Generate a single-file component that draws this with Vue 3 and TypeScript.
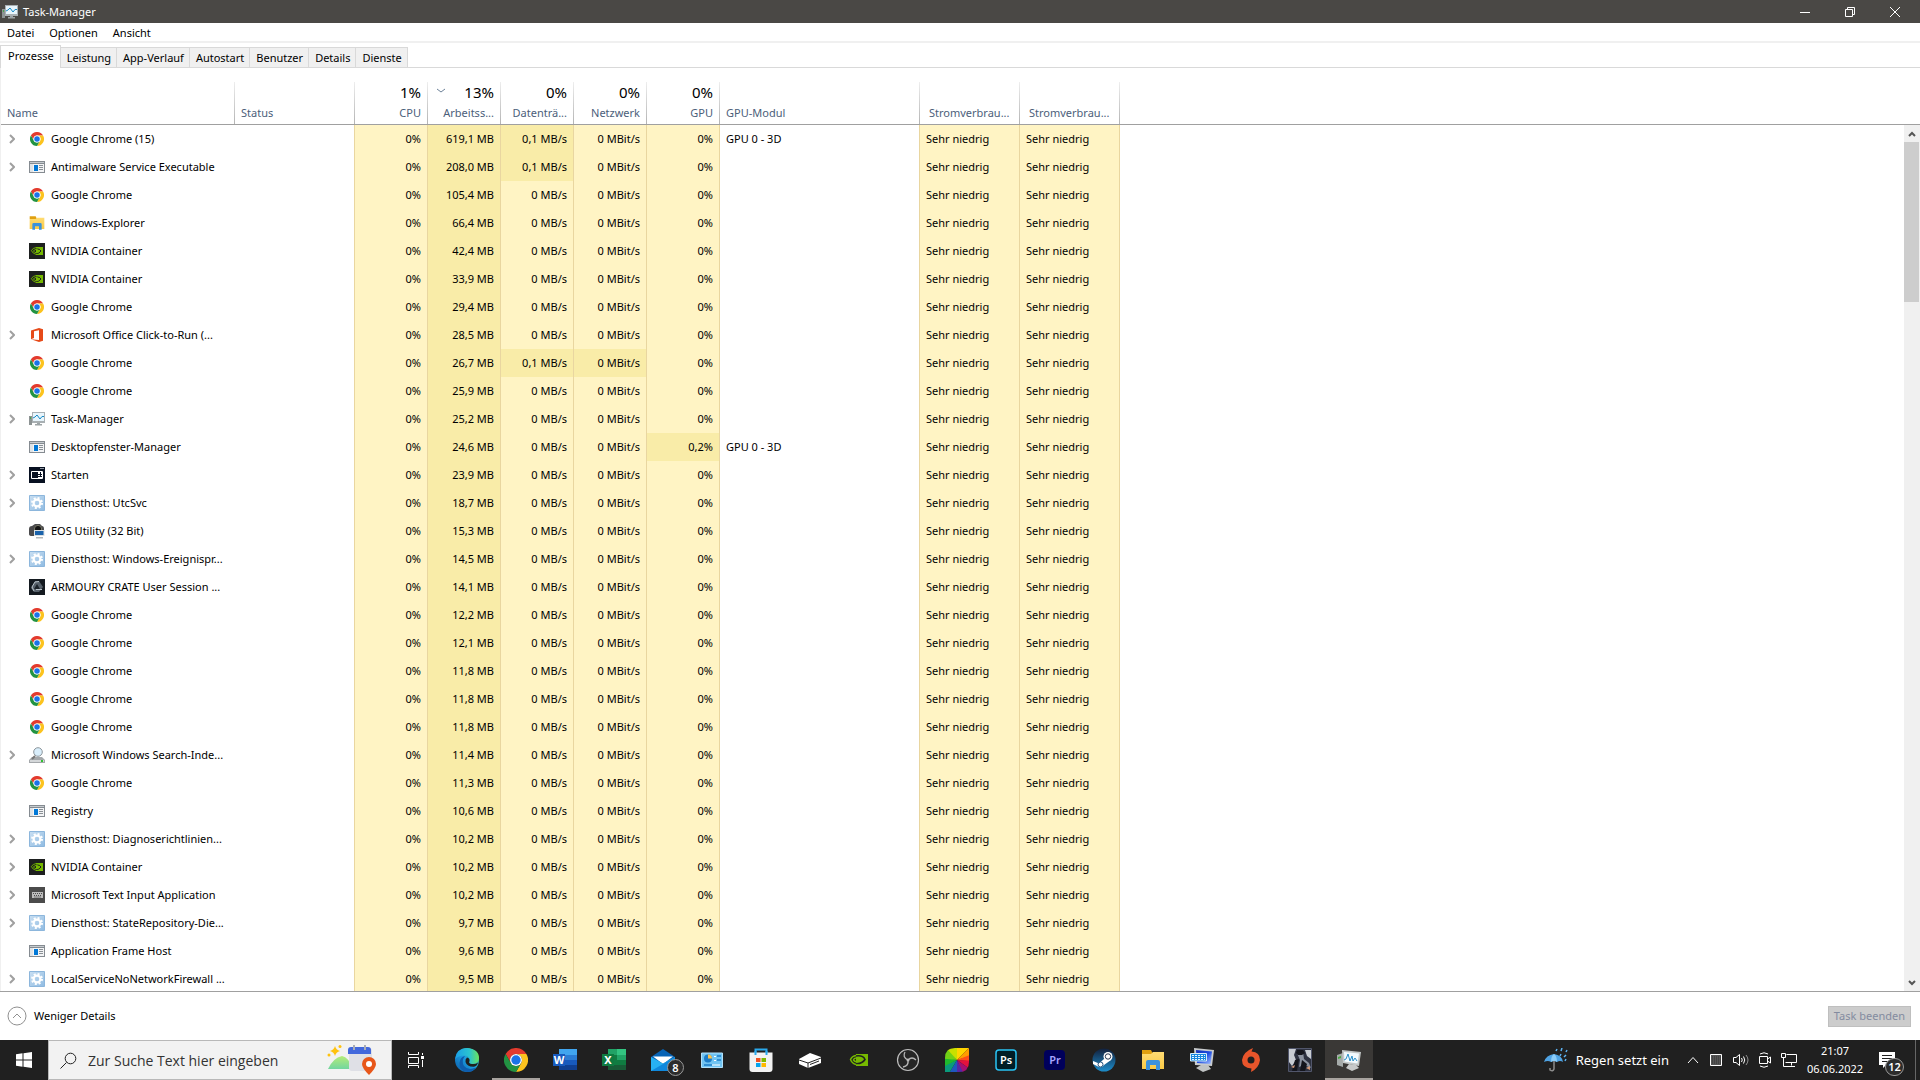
<script setup lang="ts">
import { ref } from 'vue'

interface Proc {
  name: string
  icon: string
  expandable: boolean
  memory: string
  disk: string
  gpu: string
  engine: string
  busyNet: boolean
}

interface Column {
  key: string
  label: string
  total?: string
  numeric?: boolean
  sorted?: boolean
}

function proc(name: string, icon: string, memory: string, expandable = false, extra: Partial<Proc> = {}): Proc {
  return { name, icon, memory, expandable, disk: '0 MB/s', gpu: '0%', engine: '', busyNet: false, ...extra }
}

const menu = ['Datei', 'Optionen', 'Ansicht']
const tabs = ['Prozesse', 'Leistung', 'App-Verlauf', 'Autostart', 'Benutzer', 'Details', 'Dienste']
const activeTab = ref('Prozesse')
const search = ref('')

const columns: Column[] = [
  { key: 'name', label: 'Name' },
  { key: 'status', label: 'Status' },
  { key: 'cpu', label: 'CPU', total: '1%', numeric: true },
  { key: 'memory', label: 'Arbeitss...', total: '13%', numeric: true, sorted: true },
  { key: 'disk', label: 'Datenträ...', total: '0%', numeric: true },
  { key: 'net', label: 'Netzwerk', total: '0%', numeric: true },
  { key: 'gpu', label: 'GPU', total: '0%', numeric: true },
  { key: 'engine', label: 'GPU-Modul' },
  { key: 'power', label: 'Stromverbrau...' },
  { key: 'trend', label: 'Stromverbrau...' },
]

const processes: Proc[] = [
  proc('Google Chrome (15)', 'chrome', '619,1 MB', true, { disk: '0,1 MB/s', engine: 'GPU 0 - 3D' }),
  proc('Antimalware Service Executable', 'window', '208,0 MB', true, { disk: '0,1 MB/s' }),
  proc('Google Chrome', 'chrome', '105,4 MB'),
  proc('Windows-Explorer', 'folder', '66,4 MB'),
  proc('NVIDIA Container', 'nvidia', '42,4 MB'),
  proc('NVIDIA Container', 'nvidia', '33,9 MB'),
  proc('Google Chrome', 'chrome', '29,4 MB'),
  proc('Microsoft Office Click-to-Run (...', 'office', '28,5 MB', true),
  proc('Google Chrome', 'chrome', '26,7 MB', false, { disk: '0,1 MB/s', busyNet: true }),
  proc('Google Chrome', 'chrome', '25,9 MB'),
  proc('Task-Manager', 'taskmgr', '25,2 MB', true),
  proc('Desktopfenster-Manager', 'window', '24,6 MB', false, { gpu: '0,2%', engine: 'GPU 0 - 3D' }),
  proc('Starten', 'start', '23,9 MB', true),
  proc('Diensthost: UtcSvc', 'gear', '18,7 MB', true),
  proc('EOS Utility (32 Bit)', 'camera', '15,3 MB'),
  proc('Diensthost: Windows-Ereignispr...', 'gear', '14,5 MB', true),
  proc('ARMOURY CRATE User Session ...', 'armoury', '14,1 MB'),
  proc('Google Chrome', 'chrome', '12,2 MB'),
  proc('Google Chrome', 'chrome', '12,1 MB'),
  proc('Google Chrome', 'chrome', '11,8 MB'),
  proc('Google Chrome', 'chrome', '11,8 MB'),
  proc('Google Chrome', 'chrome', '11,8 MB'),
  proc('Microsoft Windows Search-Inde...', 'indexer', '11,4 MB', true),
  proc('Google Chrome', 'chrome', '11,3 MB'),
  proc('Registry', 'window', '10,6 MB'),
  proc('Diensthost: Diagnoserichtlinien...', 'gear', '10,2 MB', true),
  proc('NVIDIA Container', 'nvidia', '10,2 MB', true),
  proc('Microsoft Text Input Application', 'keyboard', '10,2 MB', true),
  proc('Diensthost: StateRepository-Die...', 'gear', '9,7 MB', true),
  proc('Application Frame Host', 'window', '9,6 MB'),
  proc('LocalServiceNoNetworkFirewall ...', 'gear', '9,5 MB', true),
]

const pinned = [
  { icon: 'edge', title: 'Microsoft Edge' },
  { icon: 'chrome', title: 'Google Chrome', running: true },
  { icon: 'word', title: 'Word', letter: 'W' },
  { icon: 'excel', title: 'Excel', letter: 'X' },
  { icon: 'mail', title: 'Mail', badge: '8' },
  { icon: 'panel', title: 'Systemsteuerung' },
  { icon: 'store', title: 'Microsoft Store' },
  { icon: 'scanner', title: 'Scanner' },
  { icon: 'nveye', title: 'GeForce Experience' },
  { icon: 'obs', title: 'OBS Studio' },
  { icon: 'wheel', title: 'Farben' },
  { icon: 'ps', title: 'Photoshop', letter: 'Ps' },
  { icon: 'pr', title: 'Premiere Pro', letter: 'Pr' },
  { icon: 'steam', title: 'Steam' },
  { icon: 'folder', title: 'Explorer' },
  { icon: 'remote', title: 'Bildschirmtastatur' },
  { icon: 'origin', title: 'Origin' },
  { icon: 'game', title: 'Spiel' },
  { icon: 'taskmgr3d', title: 'Task-Manager', active: true },
]
</script>

<template>
  <svg class="sprites" width="0" height="0" aria-hidden="true">
    <defs>
      <linearGradient id="gEdge" x1="0" y1="1" x2="1" y2="0"><stop offset="0" stop-color="#0c59a4" /><stop offset=".5" stop-color="#1b9de2" /><stop offset="1" stop-color="#5ee06a" /></linearGradient>
      <linearGradient id="gEdgeTop" x1="0" y1="0" x2="1" y2="0"><stop offset="0" stop-color="#1a9fe8" /><stop offset=".6" stop-color="#2bc4cf" /><stop offset="1" stop-color="#6be35c" /></linearGradient>
      <linearGradient id="gSteam" x1="0" y1="0" x2="0" y2="1"><stop offset="0" stop-color="#12203c" /><stop offset="1" stop-color="#1d8dcb" /></linearGradient>
      <linearGradient id="gGear" x1="0" y1="0" x2="1" y2="1"><stop offset="0" stop-color="#c9dff2" /><stop offset="1" stop-color="#8fbbe2" /></linearGradient>
      <linearGradient id="gFolder" x1="0" y1="0" x2="0" y2="1"><stop offset="0" stop-color="#ffdc73" /><stop offset="1" stop-color="#f9c945" /></linearGradient>
      <linearGradient id="gScreen" x1="0" y1="0" x2="1" y2="1"><stop offset="0" stop-color="#1030b8" /><stop offset=".5" stop-color="#1e4ce0" /><stop offset="1" stop-color="#a8c4ff" /></linearGradient>
      <linearGradient id="gHill" x1="0" y1="0" x2="0" y2="1"><stop offset="0" stop-color="#b5ec78" /><stop offset="1" stop-color="#72d6a0" /></linearGradient>
      <clipPath id="leaf"><path d="M10 0H24V14Q24 24 14 24H0V10Q0 0 10 0Z" /></clipPath>
    </defs>
    <symbol id="chrome" viewBox="0 0 24 24">
      <path fill="#e33b2e" d="M1.6 6A12 12 0 0 1 22.4 6H12A6 6 0 0 0 6.8 15Z" />
      <path fill="#fcc31e" d="M22.4 6A12 12 0 0 1 12 24L17.2 15A6 6 0 0 0 12 6Z" />
      <path fill="#229342" d="M12 24A12 12 0 0 1 1.6 6L6.8 15A6 6 0 0 0 17.2 15Z" />
      <circle cx="12" cy="12" r="6" fill="#fff" /><circle cx="12" cy="12" r="4.7" fill="#1a73e8" />
    </symbol>
    <symbol id="window" viewBox="0 0 16 16">
      <path fill="#858b91" d="M0 2H16V14H0Z" /><path fill="#f3f4f5" d="M1 5H15V13H1Z" /><path fill="#c5cace" d="M1 3H15V4H1Z" />
      <path fill="#dfe3e6" d="M1 5H4V13H1Z" /><path fill="#0078d7" d="M5 6H9V12H5Z" /><path stroke="#8a9096" d="M10 6.5H14M10 8.5H14M10 10.5H14" />
    </symbol>
    <symbol id="folder" viewBox="0 0 24 24">
      <path fill="#e0a010" d="M1 2H10L12 6H1Z" /><path fill="url(#gFolder)" d="M1 6H10L12 4H23V21H1Z" />
      <path fill="#3b92dc" d="M5 22V14Q5 12 7 12H17Q19 12 19 14V22H15V17H9V22Z" />
    </symbol>
    <symbol id="nvidia" viewBox="0 0 16 16">
      <path fill="#1d1f1f" d="M0 0H16V16H0Z" /><path fill="#76b900" d="M7 4H14V12H7Z" />
      <path fill="none" stroke="#1d1f1f" d="M7 6Q11 5.5 12 8Q10 11 7 10.5" />
      <path fill="none" stroke="#76b900" stroke-width=".9" d="M7 4.6Q4 5 2.3 7.5Q4 10.8 7 11.3M7 6.4Q5 6.8 4.5 8Q5.5 9.8 7.5 9.8Q9.5 9 10 8Q8.5 6.2 7 6.4" />
    </symbol>
    <symbol id="office" viewBox="0 0 16 16">
      <path fill="#e64a19" d="M2 3.5L10 1L14 2.2V13.8L10 15L2 12.2L10 13V3.2L5 4.3V11L2 12.2Z" />
    </symbol>
    <symbol id="taskmgr" viewBox="0 0 16 16">
      <path fill="#8d9394" d="M0 5H3V14H0Z" /><path fill="#4ca64c" d="M1 6H2V8H1Z" />
      <path fill="#a9b0b3" d="M3 1H16V12H3Z" /><path fill="#e8f5fc" d="M4 2H15V10H4Z" />
      <path fill="none" stroke="#168bc7" d="M4 7L6 6L8 4L11 8L13 5.5H15" /><path fill="#9da4a6" d="M8 12H11V13H13V14.5H6V13H8Z" />
    </symbol>
    <symbol id="start" viewBox="0 0 16 16">
      <path fill="#071021" d="M0 0H16V16H0Z" /><path fill="none" stroke="#fff" d="M2.5 4.5H13.5V11.5H2.5Z" />
      <path fill="#fff" d="M8 5H13V11H8Z" /><path stroke="#071021" d="M9 7.5H13M9 9.5H13M8.5 5V11M11.5 5V10" /><path stroke="#8e95a0" d="M11 1.5H15" />
    </symbol>
    <symbol id="gear" viewBox="0 0 16 16">
      <path fill="url(#gGear)" stroke="#8cb6dc" d="M.5 .5H15.5V15.5H.5Z" />
      <circle cx="8" cy="8" r="3.4" fill="none" stroke="#fff" stroke-width="2.2" />
      <circle cx="8" cy="8" r="5" fill="none" stroke="#fff" stroke-width="2" stroke-dasharray="2 1.927" />
    </symbol>
    <symbol id="camera" viewBox="0 0 16 16">
      <path fill="#4b4b4d" d="M0 6Q0 3 3 3L6 1H11L13 3Q15 3 15 6V12L12 13H3Q0 13 0 11Z" /><circle cx="9" cy="6" r="3.6" fill="#141414" stroke="#776" />
      <path fill="#d9dfe2" d="M5 7H15.5V13H5Z" /><path fill="#1b63ab" d="M6 8H14.5V12H6Z" /><path fill="#b4b8ba" d="M7 14H14V15.5H7Z" />
    </symbol>
    <symbol id="armoury" viewBox="0 0 16 16">
      <path fill="#141a20" d="M0 0H16V16H0Z" /><path fill="#56606a" d="M6 2L10 2L14 8L10 13H5L2 9Z" />
      <path fill="#1b2229" d="M8 5L11 10H5Z" /><path fill="none" stroke="#b7c1c8" d="M10 2.5L6 3L3 8L5 12M7 10.5H13" />
    </symbol>
    <symbol id="indexer" viewBox="0 0 16 16">
      <path fill="#a4a8ab" d="M3 10H13L16 13V16H0V13Z" /><path fill="#d4d7d9" d="M1 13H15V15H1Z" /><path fill="#2fc02f" d="M12 13H14V15H12Z" />
      <path stroke="#777" stroke-width="2" d="M6 9L3 12" /><circle cx="9" cy="5" r="4.3" fill="#d9eefb" stroke="#8c959b" />
    </symbol>
    <symbol id="keyboard" viewBox="0 0 16 16">
      <path fill="#4b4b4b" d="M0 0H16V16H0Z" /><path fill="#bdbdbd" d="M3 5H14V11H3Z" />
      <path stroke="#4b4b4b" stroke-dasharray="1 1" d="M4 6.5H13M5 8.5H13" /><path stroke="#777" d="M5 10H12" />
    </symbol>
    <symbol id="edge" viewBox="0 0 24 24">
      <circle cx="12" cy="12" r="12" fill="url(#gEdge)" />
      <path fill="url(#gEdgeTop)" d="M.2 11Q1.5 0 12 0Q24 1 24 10Q23.5 16 17 16Q13 15.5 14.5 13Q15.5 8 10 7.5Q4 7 .2 11Z" />
      <path fill="#0e5cad" d="M10 8Q6 13 9 18Q13 23 21 19.5Q18 24 12 24Q4 23 4.5 15Q5 9 10 8Z" />
      <path fill="#202020" d="M12 9.5Q15 10 14.5 13Q13 15.500 17 16Q20.5 16.5 23 14.5Q22 18.5 19 18.7Q12 19 10.5 14Q10 11 12 9.5Z" />
    </symbol>
    <symbol id="word" viewBox="0 0 24 24">
      <path fill="#41a5ee" d="M6 1H24V7H6Z" /><path fill="#2b7cd3" d="M6 7H24V12H6Z" /><path fill="#185abd" d="M6 12H24V17H6Z" /><path fill="#103f91" d="M6 17H24V22H6Z" />
      <path fill="#185abd" d="M0 6H12V18H0Z" />
    </symbol>
    <symbol id="excel" viewBox="0 0 24 24">
      <path fill="#21a366" d="M6 1H15V7H6Z" /><path fill="#33c481" d="M15 1H24V7H15Z" /><path fill="#107c41" d="M6 7H15V17H6Z" /><path fill="#21a366" d="M15 7H24V12H15Z" />
      <path fill="#107c41" d="M15 12H24V17H15Z" /><path fill="#185c37" d="M6 17H24V22H6Z" /><path fill="#0f7a40" d="M0 6H12V18H0Z" />
    </symbol>
    <symbol id="mail" viewBox="0 0 24 24">
      <path fill="#0763b5" d="M0 9L12 1L24 9V14H0Z" /><path fill="#fff" d="M2 8.5H22L12 16Z" /><path fill="#27b1f3" d="M0 9L12 15.5L24 9V23H0Z" /><path fill="#0f88dc" d="M0 23L24 9V23Z" />
    </symbol>
    <symbol id="panel" viewBox="0 0 24 24">
      <path fill="#71c4f2" stroke="#b2e1fb" d="M1.5 5H22.5V19.5H1.5Z" /><circle cx="8" cy="10.5" r="4" fill="#1c7cc8" /><path fill="#ffc34c" d="M8 10.5V6.5A4 4 0 0 1 12 10.5Z" />
      <path stroke="#fff" d="M14 8.5H16M14 12.5H16" /><path stroke="#1c7cc8" stroke-width="1.5" d="M17 8H21M17 12H21M4 17H12" /><path stroke="#fff" d="M12 17H20" />
    </symbol>
    <symbol id="store" viewBox="0 0 24 24">
      <path fill="none" stroke="#2aa9ec" stroke-width="2" d="M6.5 7V1.5H17.5V7" /><path fill="#f2f2f2" d="M.5 4.5H23.5V21Q23.5 24 20.5 24H3.5Q.5 24 .5 21Z" /><path stroke="#2aa9ec" stroke-width="2" d="M6.5 3V7M17.5 3V7" />
      <path fill="#f04f22" d="M7 10H11.5V14H7Z" /><path fill="#7eb900" d="M12.5 10H17V14H12.5Z" /><path fill="#03a3ed" d="M7 15H11.5V19H7Z" /><path fill="#ffb900" d="M12.5 15H17V19H12.5Z" />
    </symbol>
    <symbol id="scanner" viewBox="0 0 24 24">
      <path fill="#fff" d="M1 11L12 5L23 9V15L10 20L1 16Z" /><path fill="none" stroke="#222" d="M1 12L10 15L23 10M10 15V20M12 16.5L21 13" />
    </symbol>
    <symbol id="nveye" viewBox="0 0 24 24">
      <path fill="#76b900" d="M9 6H21V18H9Z" /><path fill="none" stroke="#202020" stroke-width="1.6" d="M9 8Q16 7 18 11.5Q15 16 9 15.5" />
      <path fill="none" stroke="#76b900" stroke-width="1.5" d="M9 7.5Q5 8 3.5 11.5Q5 15.5 9 16.5M9 10Q7 10 6.5 12Q8 14.5 11 13.5Q13 12.5 13.5 11.5Q12 9.5 9 10" />
    </symbol>
    <symbol id="obs" viewBox="0 0 24 24">
      <circle cx="12" cy="12" r="10.5" fill="#262626" stroke="#bdbdbd" stroke-width="1.2" />
      <path fill="none" stroke="#b5b5b5" stroke-width="1.3" d="M9 4Q6 9 12 12M12 12Q16 8 20 12M12 12Q13 18 7 19" />
      <circle cx="12" cy="12" r="1.5" fill="#bdbdbd" />
    </symbol>
    <symbol id="wheel" viewBox="0 0 24 24">
      <g clip-path="url(#leaf)">
        <path fill="#ffd400" d="M12 12L12-8L32-8Z" /><path fill="#ff9c00" d="M12 12L32-8V6Z" /><path fill="#ff4d18" d="M12 12L32 4V14Z" />
        <path fill="#e3123d" d="M12 12L32 13V26Z" /><path fill="#a70f70" d="M12 12L32 26V32H20Z" /><path fill="#5727a5" d="M12 12L22 32H10Z" />
        <path fill="#1f58bf" d="M12 12L12 32H0Z" /><path fill="#0a9a7c" d="M12 12L0 32H-8V20Z" /><path fill="#1fb92d" d="M12 12L-8 22V8Z" /><path fill="#71d016" d="M12 12L-8 10V-8H-2Z" /><path fill="#c8e000" d="M12 12L-6-8H12Z" />
      </g>
    </symbol>
    <symbol id="ps" viewBox="0 0 24 24"><rect x="2" y="2" width="20" height="20" rx="3" fill="#001d26" stroke="#28c3f4" stroke-width="1.5" /></symbol>
    <symbol id="pr" viewBox="0 0 24 24"><rect x="1" y="2" width="21" height="20" rx="4" fill="#00005b" /></symbol>
    <symbol id="steam" viewBox="0 0 24 24">
      <circle cx="12" cy="12" r="11.5" fill="url(#gSteam)" /><path fill="#fff" d="M1 13L7 15.5L12 11L19 12L12 17Q9 21 5 18L1 16Z" />
      <circle cx="16" cy="8.5" r="4.5" fill="#fff" /><circle cx="16" cy="8.5" r="2.7" fill="#fff" stroke="#24364f" /><circle cx="8.5" cy="16.5" r="2.5" fill="#fff" stroke="#24517c" />
    </symbol>
    <symbol id="remote" viewBox="0 0 24 24">
      <path fill="#c8cbcd" d="M4 0L24 2L22 18L5 17Z" /><path fill="url(#gScreen)" d="M6 2L22 3.5L20.5 16L7 15Z" /><path fill="#1687e0" stroke="#d7ecfa" d="M.5 5.5H16.5V13H.5Z" />
      <path stroke="#e8f5ff" stroke-dasharray="2 1" d="M2 7.5H15M2 9.5H15M2 11.5H15" /><path fill="#c0c3c4" d="M11 17H18L21 21L13 24L6 20Z" />
    </symbol>
    <symbol id="origin" viewBox="0 0 24 24">
      <path fill="#e8552b" d="M14 0L12.5 3.5Q21 4 21 12Q20 20 12 24L12.5 20.5Q3 20 3 12Q4 4 14 0Z" /><circle cx="12" cy="12" r="3.5" fill="#202020" />
    </symbol>
    <symbol id="game" viewBox="0 0 24 24">
      <path fill="#2d3140" stroke="#51566b" d="M.5 .5H23.5V23.5H.5Z" /><path fill="#c8ccd3" d="M1 1H8L6 7L8 12L4 18L1 14ZM17 2H23V11L19 8Z" /><path fill="#8b929f" d="M9 5L15 4L16 11L21 15L23 20L16 17L11 19L12 12Z" />
      <path fill="#14151c" d="M9 2H15L17 5L14 7L10 7L8 5ZM7 12L11 11L9 23H4ZM14 12L19 16L17 23H12Z" /><path fill="#d29a7a" d="M3 19L7 17L6 20ZM18 20L22 18V22Z" />
    </symbol>
    <symbol id="taskmgr3d" viewBox="0 0 24 24">
      <path fill="#a5aaa9" d="M0 7L6 5V19L0 17Z" /><path fill="#49a942" d="M1 9L4 8V10L1 11Z" /><path fill="#c4c8c8" d="M5 2L24 4L22 18L6 15Z" /><path fill="#f2fafe" d="M7 4L22 5.5L20.5 15.5L7.5 13.5Z" />
      <path fill="none" stroke="#2a8fc9" d="M7 12L9 11L11 6L13 13L15 8L16 13L18 10L20 13" /><path fill="#c7c9c9" d="M12 16L19 17L22 20L15 23L9 20Z" />
    </symbol>
  </svg>

  <div class="desktop">
    <header class="titlebar">
      <svg class="icon16"><use href="#taskmgr" /></svg>
      <h1>Task-Manager</h1>
      <div class="controls">
        <button aria-label="Minimieren"><svg viewBox="0 0 10 10"><path d="M0 5.5H10" /></svg></button>
        <button aria-label="Verkleinern"><svg viewBox="0 0 10 10"><path d="M.5 2.5H7.5V9.5H.5ZM2.5 2.5V.5H9.5V7.5H7.5" /></svg></button>
        <button aria-label="Schließen"><svg viewBox="0 0 10 10"><path d="M0 0L10 10M10 0L0 10" /></svg></button>
      </div>
    </header>

    <nav class="menu"><button v-for="m in menu" :key="m">{{ m }}</button></nav>

    <div class="tabs" role="tablist">
      <button v-for="t in tabs" :key="t" role="tab" :aria-selected="t === activeTab" :class="{ active: t === activeTab }" @click="activeTab = t">{{ t }}</button>
    </div>

    <main class="list">
      <div class="viewport">
        <table>
          <colgroup>
            <col v-for="c in columns" :key="c.key" :class="'w-' + c.key" />
            <col />
          </colgroup>
          <thead>
            <tr>
              <th v-for="c in columns" :key="c.key" scope="col" :class="['h-' + c.key, { numeric: c.numeric }]">
                <div v-if="c.total" class="total">
                  <svg v-if="c.sorted" class="sort" viewBox="0 0 10 6"><path d="M1 1L5 4L9 1" /></svg>
                  <span>{{ c.total }}</span>
                </div>
                <div class="label">{{ c.label }}</div>
              </th>
              <td class="rest"></td>
            </tr>
          </thead>
          <tbody>
            <tr v-for="(p, i) in processes" :key="i">
              <td>
                <div class="process">
                  <button v-if="p.expandable" class="expand" :aria-label="p.name + ' erweitern'"><svg viewBox="0 0 6 10"><path d="M1 1L5 5L1 9" /></svg></button>
                  <span v-else class="expand"></span>
                  <svg class="icon16" :class="{ small: p.icon === 'chrome' }"><use :href="'#' + p.icon" /></svg>
                  <span>{{ p.name }}</span>
                </div>
              </td>
              <td class="edge"></td>
              <td class="heat numeric">0%</td>
              <td class="heat numeric high">{{ p.memory }}</td>
              <td class="heat numeric" :class="{ high: p.disk !== '0 MB/s' }">{{ p.disk }}</td>
              <td class="heat numeric" :class="{ high: p.busyNet }">0 MBit/s</td>
              <td class="heat numeric" :class="{ high: p.gpu !== '0%' }">{{ p.gpu }}</td>
              <td class="edge">{{ p.engine }}</td>
              <td class="heat">Sehr niedrig</td>
              <td class="heat">Sehr niedrig</td>
              <td></td>
            </tr>
          </tbody>
        </table>
      </div>
      <div class="side">
        <div class="corner"></div>
        <div class="scrollbar">
          <button aria-label="Nach oben"><svg viewBox="0 0 8 6"><path d="M1 5L4 2L7 5" /></svg></button>
          <div class="track"><div class="thumb"></div></div>
          <button aria-label="Nach unten"><svg viewBox="0 0 8 6"><path d="M1 1L4 4L7 1" /></svg></button>
        </div>
      </div>
    </main>

    <footer class="actions">
      <button class="fewer">
        <svg viewBox="0 0 20 20"><circle cx="10" cy="10" r="9" /><path d="M6 12L10 8L14 12" /></svg>
        <span>Weniger Details</span>
      </button>
      <button class="end" disabled>Task beenden</button>
    </footer>

    <div class="taskbar">
      <button class="startbtn" aria-label="Start">
        <svg viewBox="0 0 16 16"><path fill="#fff" d="M0 2.2L6.5 1.3V7.5H0ZM7.5 1.2L16 0V7.5H7.5ZM0 8.5H6.5V14.7L0 13.8ZM7.5 8.5H16V16L7.5 14.8Z" /></svg>
      </button>
      <label class="search">
        <svg class="lens" viewBox="0 0 17 17"><circle cx="10.5" cy="6.5" r="5.3" /><path d="M6.5 10.5L.5 16.5" /></svg>
        <input v-model="search" type="text" placeholder="Zur Suche Text hier eingeben" aria-label="Suche" />
        <svg class="scene" viewBox="0 0 50 32">
          <path fill="#ffc20e" d="M8 2Q9 6 13 7Q9 8 8 12Q7 8 3 7Q7 6 8 2Z" /><circle cx="13" cy="2.5" r="1.5" fill="#ffc20e" /><circle cx="2" cy="11" r="1.5" fill="#ffc20e" />
          <path fill="url(#gHill)" d="M1 25Q6 14 15 12Q22 13 25 25Z" /><rect x="22" y="4" width="23" height="23" rx="3" fill="#dfe0e6" />
          <path fill="#4268dc" d="M21 10V6Q21 3 24 3H41Q44 3 44 6V10Z" /><path stroke="#a9acb5" stroke-width="2" d="M27 1V6M38 1V6" />
          <path fill="#e8571a" d="M42 31Q35 24 35 20A7 7 0 0 1 49 20Q49 24 42 31Z" /><circle cx="42" cy="20" r="3" fill="#fff" />
        </svg>
      </label>
      <button class="taskview" aria-label="Aktive Anwendungen">
        <svg viewBox="0 0 16 16"><path fill="none" stroke="#fff" d="M.5 0V2.5H10.5V0M.5 5.5H10.5V11.5H.5ZM.5 16V13.5H10.5V16M14.5 1V3M14.5 8V15" /><path fill="#fff" d="M13 4H16V7H13Z" /></svg>
      </button>
      <div class="apps">
        <button v-for="a in pinned" :key="a.icon" class="app" :class="{ running: a.running, active: a.active }" :aria-label="a.title">
          <svg class="icon24"><use :href="'#' + a.icon" /></svg>
          <span v-if="a.letter" class="letter" :class="'l-' + a.icon">{{ a.letter }}</span>
          <span v-if="a.badge" class="badge">{{ a.badge }}</span>
        </button>
      </div>
      <div class="tray">
        <button class="weather">
          <svg viewBox="0 0 24 24"><path fill="#4fa3e3" d="M0 14Q2 7 10 6Q18 7 19 14Q16 12 13 14Q10 12 7 14Q4 12 0 14Z" /><path fill="#8cccf7" d="M7 14Q7 8 10 6Q13 8 13 14Q10 12 7 14Z" /><path fill="none" stroke="#8c8c8c" stroke-width="1.5" d="M10 13V21Q9 24 6 22V20" /><path stroke="#5db3f2" stroke-width="1.5" d="M12 3L13 1M17 3L18 0M22 4L23 2M16 8L17 6M20 9L22 7M21 13L22 11" /></svg>
          <span>Regen setzt ein</span>
        </button>
        <button class="t-up" aria-label="Ausgeblendete Symbole"><svg viewBox="0 0 12 12"><path d="M1 9L6 3.5L11 9" /></svg></button>
        <button class="t-grid" aria-label="Anzeige"><svg viewBox="0 0 12 12"><path fill="#555" d="M.5 .5H11.5V11.5H.5Z" /><path stroke="#333" stroke-dasharray="1 1" d="M2 3H11M2 5H11M2 7H11M2 9H11" /></svg></button>
        <button class="t-vol" aria-label="Lautsprecher"><svg viewBox="0 0 16 16"><path d="M.5 5.5H3L6.5 2.5V13.5L3 10.5H.5ZM8.5 6Q10 8 8.5 10M10.5 4.5Q13 8 10.5 11.5" /><path opacity=".5" d="M13 3Q17 8 13 13" /></svg></button>
        <button class="t-cam" aria-label="Jetzt besprechen"><svg viewBox="0 0 12 16"><path d="M1 2Q5 -.5 9 2M1 14Q5 16.5 9 14M.5 4.5H8.5V11.5H.5ZM8.5 7L11.5 5V11L8.5 9" /></svg></button>
        <button class="t-net" aria-label="Netzwerk"><svg viewBox="0 0 16 16"><path d="M5.5 2.5H15.5V10.5H4.5M10.5 10.5V13.5M6 14.5H14M.5 1.5H4.5V5.5H.5ZM2.5 5.5V14.5H6" /></svg></button>
        <div class="clock"><time>21:07</time><time>06.06.2022</time></div>
        <button class="notify" aria-label="Benachrichtigungen">
          <svg viewBox="0 0 16 16"><path fill="#fff" d="M0 0H16V13H7L4 16V13H0Z" /><path stroke="#202020" d="M3 3.5H13M3 6.5H13M3 9.5H9" /></svg>
          <span class="badge">12</span>
        </button>
        <button class="peek" aria-label="Desktop anzeigen"></button>
      </div>
    </div>
  </div>
</template>

<style>
body {
  margin: 0;
  background: #fff;
}
</style>

<style scoped>
.desktop {
  display: flex;
  flex-direction: column;
  height: 100vh;
  overflow: hidden;
  font: 11px/16px "Noto Sans", "Open Sans", sans-serif;
  color: #000;
}
.sprites {
  position: absolute;
}
button {
  margin: 0;
  padding: 0;
  border: 0;
  background: none;
  font: inherit;
  color: inherit;
}
svg {
  display: block;
  flex: none;
}
.icon16 {
  width: 16px;
  height: 16px;
}
.icon16.small {
  width: 14px;
  height: 14px;
  margin: 0 1px;
}
.icon24 {
  width: 24px;
  height: 24px;
}

.titlebar {
  display: flex;
  align-items: center;
  flex: none;
  height: 23px;
  padding: 0 3px 0 2px;
  background: #4a4845;
  color: #fff;
}
.titlebar h1 {
  flex: 1;
  margin: 0 0 0 5px;
  font-size: 11px;
  font-weight: 400;
}
.controls {
  display: flex;
}
.controls button {
  display: flex;
  align-items: center;
  justify-content: center;
  width: 45px;
  height: 20px;
}
.controls svg {
  width: 10px;
  height: 10px;
  fill: none;
  stroke: #fff;
}
.menu {
  display: flex;
  flex: none;
  gap: 15px;
  height: 18px;
  padding: 0 7px;
  border-bottom: 2px solid #f0f0f0;
}
.menu button {
  line-height: 20px;
}
.tabs {
  display: flex;
  flex: none;
  align-items: flex-end;
  height: 25px;
  box-shadow: inset 0 -1px #d9d9d9;
}
.tabs button {
  height: 21px;
  padding: 0 5px 0 6px;
  border: 1px solid #d9d9d9;
  border-left: 0;
  background: #f0f0f0;
}
.tabs button.active {
  height: 23px;
  padding: 0 6px 2px 7px;
  border-left: 1px solid #d9d9d9;
  border-bottom: 0;
  background: #fff;
}

.list {
  display: flex;
  flex: 1;
  min-height: 0;
  border-left: 1px solid #f0f0f0;
}
.viewport {
  flex: 1;
  min-width: 0;
  overflow: hidden;
}
table {
  width: 100%;
  table-layout: fixed;
  border-collapse: separate;
  border-spacing: 0;
}
.w-name {
  width: 234px;
}
.w-status {
  width: 120px;
}
.w-cpu,
.w-memory,
.w-disk,
.w-net,
.w-gpu {
  width: 73px;
}
.w-engine {
  width: 200px;
}
.w-power,
.w-trend {
  width: 100px;
}
th,
td {
  box-sizing: border-box;
  padding: 0 6px;
  text-align: left;
  font-weight: 400;
  white-space: nowrap;
}
th,
.rest {
  height: 57px;
  border-bottom: 1px solid #a0a0a0;
}
th {
  padding-bottom: 1px;
  vertical-align: bottom;
  color: #4c607a;
  background: linear-gradient(#eee, #b4b4b4) right bottom / 1px 42px no-repeat;
}
.h-power,
.h-trend {
  padding-left: 9px;
}
th.numeric {
  padding-right: 7px;
}
.numeric {
  text-align: right;
}
.total {
  display: flex;
  justify-content: flex-end;
  margin-bottom: 1px;
  font-size: 15px;
  line-height: 20px;
  color: #000;
}
.total .sort {
  width: 10px;
  height: 6px;
  margin: 6px auto 0 2px;
  fill: none;
  stroke: #6d8299;
}
.label {
  line-height: 20px;
}
tbody td {
  height: 28px;
  border-right: 1px solid transparent;
}
tbody .edge,
.heat {
  border-right-color: #e9d6a0;
}
.heat {
  background: #fff4c4;
}
.heat.high {
  background: #f9eca8;
}
.process {
  display: flex;
  align-items: center;
  gap: 6px;
}
.expand {
  display: flex;
  justify-content: center;
  width: 10px;
}
.process .expand + svg {
  margin-left: 6px;
}
.process .expand + svg.small {
  margin-left: 7px;
}
.expand svg {
  width: 6px;
  height: 10px;
  fill: none;
  stroke: #a0a0a0;
  stroke-width: 2px;
}
.side {
  display: flex;
  flex-direction: column;
  width: 16px;
}
.corner {
  box-sizing: border-box;
  flex: none;
  height: 57px;
  border-bottom: 1px solid #a0a0a0;
}
.scrollbar {
  display: flex;
  flex: 1;
  flex-direction: column;
  background: #f0f0f0;
}
.scrollbar button {
  display: flex;
  align-items: center;
  justify-content: center;
  height: 17px;
}
.scrollbar svg {
  width: 8px;
  height: 6px;
  fill: none;
  stroke: #555;
  stroke-width: 2px;
}
.track {
  flex: 1;
}
.thumb {
  height: 160px;
  margin-right: 1px;
  background: #cdcdcd;
}

.actions {
  box-sizing: border-box;
  display: flex;
  flex: none;
  align-items: center;
  justify-content: space-between;
  height: 49px;
  padding: 0 9px 0 7px;
  border-top: 1px solid #a0a0a0;
}
.fewer {
  display: flex;
  align-items: center;
  gap: 7px;
}
.fewer svg {
  width: 20px;
  height: 20px;
  fill: none;
  stroke: #909090;
}
.end {
  height: 21px;
  padding: 0 5px;
  border: 1px solid #bfbfbf;
  background: #ccc;
  color: #838b9f;
  line-height: 18px;
}

.taskbar {
  display: flex;
  flex: none;
  height: 40px;
  background: #202020;
  color: #fff;
}
.startbtn,
.taskview {
  display: flex;
  align-items: center;
  justify-content: center;
  width: 48px;
}
.taskview {
  margin-right: 3px;
}
.startbtn svg,
.taskview svg {
  width: 16px;
  height: 16px;
}
.search {
  box-sizing: border-box;
  display: flex;
  align-items: center;
  width: 344px;
  padding: 0 14px 0 11px;
  border: 1px solid #b8b8b8;
  background: #f2f2f2;
}
.lens {
  width: 17px;
  height: 17px;
  fill: none;
  stroke: #222;
}
.search input {
  flex: 1;
  min-width: 0;
  margin-left: 11px;
  padding: 2px 0 0;
  border: 0;
  outline: 0;
  background: none;
  font: 14px/20px "Open Sans", "Noto Sans", sans-serif;
}
.search input::placeholder {
  color: #333;
  opacity: 1;
}
.scene {
  width: 50px;
  height: 32px;
}
.apps {
  display: flex;
  flex: 1;
  gap: 1px;
}
.app {
  position: relative;
  display: flex;
  align-items: center;
  justify-content: center;
  width: 48px;
}
.app.running {
  box-shadow: inset 0 -2px #a8a39f;
}
.app.active {
  background: #3a3836;
  box-shadow: inset 0 -2px #a8a39f;
}
.letter {
  position: absolute;
  top: 10px;
  left: 12px;
  width: 24px;
  font-size: 11px;
  font-weight: 600;
  line-height: 20px;
  text-align: center;
  color: #fff;
}
.l-word,
.l-excel {
  width: 12px;
  font-weight: 700;
}
.l-pr {
  color: #a8a5ff;
}
.badge {
  position: absolute;
  top: 19px;
  left: 28px;
  box-sizing: border-box;
  width: 17px;
  height: 17px;
  border: 1px solid #999;
  border-radius: 9px;
  background: #2c2c2c;
  font-size: 11px;
  font-weight: 600;
  line-height: 15px;
  text-align: center;
}
.tray {
  display: flex;
  align-items: center;
}
.tray svg {
  width: 16px;
  height: 16px;
  fill: none;
  stroke: #fff;
}
.weather {
  display: flex;
  align-items: center;
  gap: 8px;
  margin-right: 18px;
  font-size: 13px;
}
.tray .weather svg {
  width: 24px;
  height: 24px;
  stroke: none;
}
.tray .t-up svg,
.tray .t-grid svg,
.tray .t-cam svg {
  width: 12px;
}
.t-up,
.t-grid {
  margin-right: 11px;
}
.t-vol,
.t-cam,
.t-net {
  margin-right: 10px;
}
.clock {
  display: flex;
  flex-direction: column;
  align-items: center;
  width: 56px;
  line-height: 18px;
}
.notify {
  position: relative;
  width: 52px;
  height: 40px;
}
.tray .notify svg {
  margin-left: 16px;
  stroke: none;
}
.notify .badge {
  top: 18px;
  left: 22px;
  width: 19px;
  height: 18px;
}
.peek {
  align-self: stretch;
  width: 5px;
  border-left: 1px solid #666;
}
</style>
